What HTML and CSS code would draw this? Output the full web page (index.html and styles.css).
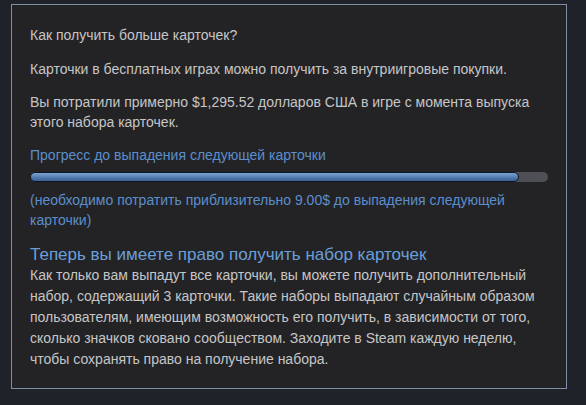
FILE: index.html
```
<!DOCTYPE html>
<html lang="ru">
<head>
    <meta charset="UTF-8">
    <title>Карточки</title>
    <link rel="stylesheet" href="styles.css">
</head>
<body>
    <div class="panel">
        <p class="line">Как получить больше карточек?</p>
        <p class="line">Карточки в бесплатных играх можно получить за внутриигровые покупки.</p>
        <p class="line">Вы потратили примерно $1,295.52 долларов США в игре с момента выпуска этого набора карточек.</p>

        <p class="progress-label">Прогресс до выпадения следующей карточки</p>
        <div class="progress-track">
            <div class="progress-fill" style="width: 94.4%"></div>
        </div>
        <p class="progress-note">(необходимо потратить приблизительно 9.00$ до выпадения следующей карточки)</p>

        <h2 class="eligible-title">Теперь вы имеете право получить набор карточек</h2>
        <p class="eligible-text">Как только вам выпадут все карточки, вы можете получить дополнительный набор, содержащий 3 карточки. Такие наборы выпадают случайным образом пользователям, имеющим возможность его получить, в зависимости от того, сколько значков сковано сообществом. Заходите в Steam каждую неделю, чтобы сохранять право на получение набора.</p>
    </div>
</body>
</html>
```

FILE: styles.css
```
* {
    margin: 0;
    padding: 0;
    box-sizing: border-box;
}

body {
    background-color: #1f2329;
    font-family: "Liberation Sans", Arial, sans-serif;
    font-size: 14px;
    color: #c6c6c6;
}

.panel {
    width: 556px;
    height: 385px;
    margin: 4px 0 0 11px;
    padding: 20px 18px 0 18px;
    background-color: #232326;
    border: 1px solid #7d8ea6;
}

.line {
    line-height: 20px;
    margin-bottom: 13px;
}

.line:first-child {
    margin-bottom: 14px;
}

.progress-label {
    color: #5b8fcc;
    line-height: 20px;
}

.progress-track {
    width: 518px;
    height: 10px;
    margin: 7px 0 8px 0;
    background-color: #4e5055;
    border-radius: 5px;
}

.progress-fill {
    height: 10px;
    border-radius: 5px;
    border: 1px solid #0b1728;
    background: linear-gradient(#7ea3d2, #4f78ab 60%, #3d6090);
}

.progress-note {
    color: #5b8fcc;
    line-height: 20px;
}

.eligible-title {
    margin-top: 15px;
    font-weight: normal;
    font-size: 17px;
    line-height: 20px;
    color: #6a9fd8;
}

.eligible-text {
    line-height: 21px;
}
```
